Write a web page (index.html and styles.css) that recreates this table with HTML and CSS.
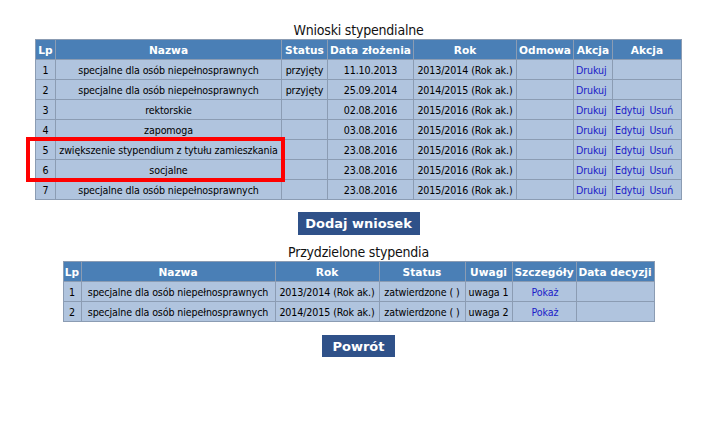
FILE: index.html
```html
<!DOCTYPE html>
<html lang="pl">
<head>
<meta charset="utf-8">
<title>Wnioski stypendialne</title>
<link rel="stylesheet" href="styles.css">
</head>
<body>
<div class="page">
  <div class="caption">Wnioski stypendialne</div>
  <div class="wrap">
    <table class="grid grid-a">
      <colgroup>
        <col class="w20"><col class="w226"><col class="w46"><col class="w86"><col class="w103"><col class="w57"><col class="w39"><col class="w69">
      </colgroup>
      <thead>
        <tr><th>Lp</th><th>Nazwa</th><th>Status</th><th>Data złożenia</th><th>Rok</th><th>Odmowa</th><th>Akcja</th><th>Akcja</th></tr>
      </thead>
      <tbody>
        <tr><td>1</td><td>specjalne dla osób niepełnosprawnych</td><td>przyjęty</td><td>11.10.2013</td><td>2013/2014 (Rok ak.)</td><td></td><td class="act"><a href="#">Drukuj</a></td><td></td></tr>
        <tr><td>2</td><td>specjalne dla osób niepełnosprawnych</td><td>przyjęty</td><td>25.09.2014</td><td>2014/2015 (Rok ak.)</td><td></td><td class="act"><a href="#">Drukuj</a></td><td></td></tr>
        <tr><td>3</td><td>rektorskie</td><td></td><td>02.08.2016</td><td>2015/2016 (Rok ak.)</td><td></td><td class="act"><a href="#">Drukuj</a></td><td class="act"><a href="#">Edytuj</a> <a href="#">Usuń</a></td></tr>
        <tr><td>4</td><td>zapomoga</td><td></td><td>03.08.2016</td><td>2015/2016 (Rok ak.)</td><td></td><td class="act"><a href="#">Drukuj</a></td><td class="act"><a href="#">Edytuj</a> <a href="#">Usuń</a></td></tr>
        <tr><td>5</td><td>zwiększenie stypendium z tytułu zamieszkania</td><td></td><td>23.08.2016</td><td>2015/2016 (Rok ak.)</td><td></td><td class="act"><a href="#">Drukuj</a></td><td class="act"><a href="#">Edytuj</a> <a href="#">Usuń</a></td></tr>
        <tr><td>6</td><td>socjalne</td><td></td><td>23.08.2016</td><td>2015/2016 (Rok ak.)</td><td></td><td class="act"><a href="#">Drukuj</a></td><td class="act"><a href="#">Edytuj</a> <a href="#">Usuń</a></td></tr>
        <tr><td>7</td><td>specjalne dla osób niepełnosprawnych</td><td></td><td>23.08.2016</td><td>2015/2016 (Rok ak.)</td><td></td><td class="act"><a href="#">Drukuj</a></td><td class="act"><a href="#">Edytuj</a> <a href="#">Usuń</a></td></tr>
      </tbody>
    </table>
    <div class="highlight"></div>
  </div>
  <button class="btn btn-add" type="button">Dodaj wniosek</button>
  <div class="caption caption-2">Przydzielone stypendia</div>
  <table class="grid grid-b">
    <colgroup>
      <col class="w18"><col class="w194"><col class="w104"><col class="w86"><col class="w47"><col class="w64"><col class="w78">
    </colgroup>
    <thead>
      <tr><th>Lp</th><th>Nazwa</th><th>Rok</th><th>Status</th><th>Uwagi</th><th>Szczegóły</th><th>Data decyzji</th></tr>
    </thead>
    <tbody>
      <tr><td>1</td><td>specjalne dla osób niepełnosprawnych</td><td>2013/2014 (Rok ak.)</td><td>zatwierdzone ( )</td><td>uwaga 1</td><td class="act"><a href="#">Pokaż</a></td><td></td></tr>
      <tr><td>2</td><td>specjalne dla osób niepełnosprawnych</td><td>2014/2015 (Rok ak.)</td><td>zatwierdzone ( )</td><td>uwaga 2</td><td class="act"><a href="#">Pokaż</a></td><td></td></tr>
    </tbody>
  </table>
  <button class="btn btn-back" type="button">Powrót</button>
</div>
</body>
</html>
```

FILE: styles.css
```css
html, body {
  margin: 0;
  padding: 0;
  background: #ffffff;
}

body {
  font-family: "DejaVu Sans Condensed", "DejaVu Sans", sans-serif;
  font-size: 10.6px;
  color: #000000;
}

.page {
  display: flex;
  flex-direction: column;
  align-items: center;
  padding-top: 22px;
}

.caption {
  font-size: 14px;
  line-height: 17px;
  height: 17px;
  color: #111111;
  font-weight: 300;
  letter-spacing: -0.2px;
}

.caption-2 {
  margin-top: 9px;
  height: 17px;
}

.wrap {
  position: relative;
}

.grid {
  border-collapse: collapse;
  table-layout: fixed;
  background: #b0c4de;
}

.grid-a { width: 646px; }
.grid-b { width: 591px; }

.grid th,
.grid td {
  border: 1px solid #8b9cb3;
  height: 19px;
  padding: 0;
  text-align: center;
  white-space: nowrap;
  overflow: hidden;
  line-height: 18px;
}

.grid td {
  letter-spacing: -0.1px;
}

.grid th {
  background: #4a7fb6;
  color: #ffffff;
  font-family: "DejaVu Sans", sans-serif;
  font-weight: bold;
  font-size: 10.6px;
}

.grid td.act {
  text-align: left;
  padding-left: 2px;
  word-spacing: 2px;
}

.grid-b td.act {
  text-align: center;
}

.grid a {
  color: #1c1cc8;
  text-decoration: none;
}

.w18 { width: 18px; }
.w20 { width: 20px; }
.w39 { width: 39px; }
.w46 { width: 46px; }
.w47 { width: 47px; }
.w57 { width: 57px; }
.w64 { width: 64px; }
.w69 { width: 69px; }
.w78 { width: 78px; }
.w86 { width: 86px; }
.w103 { width: 103px; }
.w104 { width: 104px; }
.w194 { width: 194px; }
.w226 { width: 226px; }

.highlight {
  position: absolute;
  left: -9px;
  top: 98px;
  width: 251px;
  height: 37px;
  border: 4px solid #ff0000;
  pointer-events: none;
}

.btn {
  border: 0;
  margin: 0;
  background: #2f5189;
  color: #ffffff;
  font-family: "DejaVu Sans", sans-serif;
  font-weight: bold;
  font-size: 13px;
  height: 23px;
  padding: 0;
  cursor: pointer;
}

.btn-add {
  margin-top: 12px;
  width: 122px;
}

.btn-back {
  margin-top: 13px;
  width: 73px;
  height: 22px;
}
```
